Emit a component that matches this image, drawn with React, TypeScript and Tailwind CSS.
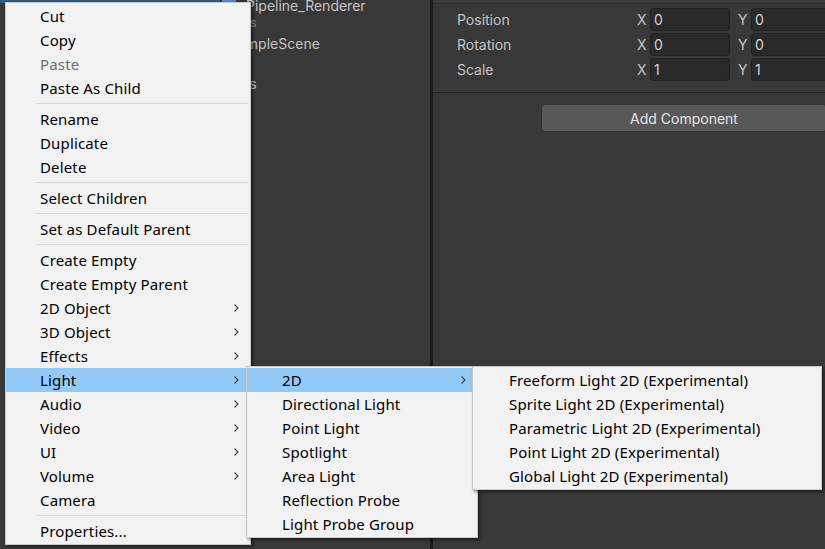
import React from "react";

type Entry = { label: string; disabled?: boolean; sub?: boolean; active?: boolean } | "sep";

const mainMenu: Entry[] = [
  { label: "Cut" },
  { label: "Copy" },
  { label: "Paste", disabled: true },
  { label: "Paste As Child" },
  "sep",
  { label: "Rename" },
  { label: "Duplicate" },
  { label: "Delete" },
  "sep",
  { label: "Select Children" },
  "sep",
  { label: "Set as Default Parent" },
  "sep",
  { label: "Create Empty" },
  { label: "Create Empty Parent" },
  { label: "2D Object", sub: true },
  { label: "3D Object", sub: true },
  { label: "Effects", sub: true },
  { label: "Light", sub: true, active: true },
  { label: "Audio", sub: true },
  { label: "Video", sub: true },
  { label: "UI", sub: true },
  { label: "Volume", sub: true },
  { label: "Camera" },
  "sep",
  { label: "Properties..." },
];

const lightMenu: Entry[] = [
  { label: "2D", sub: true, active: true },
  { label: "Directional Light" },
  { label: "Point Light" },
  { label: "Spotlight" },
  { label: "Area Light" },
  { label: "Reflection Probe" },
  { label: "Light Probe Group" },
];

const light2dMenu: Entry[] = [
  { label: "Freeform Light 2D (Experimental)" },
  { label: "Sprite Light 2D (Experimental)" },
  { label: "Parametric Light 2D (Experimental)" },
  { label: "Point Light 2D (Experimental)" },
  { label: "Global Light 2D (Experimental)" },
];

function Chevron() {
  return (
    <svg width="6" height="10" viewBox="0 0 6 10" className="shrink-0">
      <path d="M1.5 1.5 L5 5 L1.5 8.5" fill="none" stroke="#404040" strokeWidth="1.1" />
    </svg>
  );
}

function Menu({ items, className, textPad }: { items: Entry[]; className: string; textPad: string }) {
  return (
    <div
      className={`absolute bg-[#f2f2f2] border border-[#c8c8c8] py-px shadow-[2px_2px_3px_rgba(0,0,0,0.45)] font-['Noto_Sans',sans-serif] text-[15px] tracking-[0.15px] ${className}`}
    >
      {items.map((it, i) =>
        it === "sep" ? (
          <div key={i} className="h-[7px] flex items-center pl-[30px] pr-[2px]">
            <div className="h-px w-full bg-[#d7d7d7]" />
          </div>
        ) : (
          <div
            key={i}
            className={`h-[24px] flex items-center pr-[11px] ${textPad} ${it.active ? "bg-[#91c9f7]" : ""} ${
              it.disabled ? "text-[#6d6d6d]" : "text-black"
            }`}
          >
            <span className="flex-1 whitespace-nowrap leading-none pt-px">{it.label}</span>
            {it.sub && <Chevron />}
          </div>
        )
      )}
    </div>
  );
}

function VecField({ axis, value }: { axis: string; value: string }) {
  return (
    <div className="flex items-center">
      <span className="w-[13px] text-[#c4c4c4]">{axis}</span>
      <div className="w-[80px] h-[23px] rounded-[3px] bg-[#2a2a2a] border border-[#212121] flex items-center pl-[3px] text-[#d2d2d2]">
        {value}
      </div>
    </div>
  );
}

export default function App() {
  const rows = [
    ["Position", "0", "0"],
    ["Rotation", "0", "0"],
    ["Scale", "1", "1"],
  ];

  return (
    <div className="relative w-[825px] h-[549px] overflow-hidden bg-[#383838] flex font-['Inter',sans-serif] text-[14px]">
      {/* project panel behind the menu */}
      <div className="w-[430px] shrink-0 flex flex-col text-[#c4c4c4]">
        <div className="h-[3px] w-[220px] bg-[#2c5d87]" />
        <div className="h-[20px] -mt-[8px] flex items-center pl-[222px]">
          <div className="w-[14px] h-[12px] bg-[#4a8ad0] mr-[10px]" />
          <span className="whitespace-nowrap">Pipeline_Renderer</span>
        </div>
        <div className="h-[15px] flex items-center pl-[214px] text-[12px] text-[#9a9a9a]">Presets</div>
        <div className="h-[26px] flex items-center pl-[229px]">SampleScene</div>
        <div className="h-[17px]" />
        <div className="h-[20px] flex items-center pl-[203px]">Settings</div>
      </div>
      <div className="w-[3px] shrink-0 bg-[#1b1b1b]" />

      {/* inspector */}
      <div className="flex-1 flex flex-col">
        <div className="h-[4px] bg-[#3c3c3c] border-b border-[#2a2a2a]" />
        <div className="pt-[3px] pb-[10px] pl-[24px] border-b border-[#232323] flex flex-col">
          {rows.map(([label, x, y]) => (
            <div key={label} className="h-[25px] flex items-center whitespace-nowrap">
              <span className="w-[180px] text-[#c4c4c4]">{label}</span>
              <VecField axis="X" value={x} />
              <div className="w-[8px]" />
              <VecField axis="Y" value={y} />
            </div>
          ))}
        </div>
        <div className="pt-[11px] pl-[108px] flex">
          <button className="w-[286px] h-[28px] shrink-0 rounded-[4px] bg-[#585858] border border-[#303030] text-[#e4e4e4] text-[14px]">
            Add Component
          </button>
        </div>
      </div>

      {/* context menus */}
      <Menu items={mainMenu} className="left-[5px] top-[2px] w-[246px]" textPad="pl-[34px]" />
      <Menu items={lightMenu} className="left-[246px] top-[366px] w-[232px]" textPad="pl-[35px]" />
      <Menu items={light2dMenu} className="left-[472px] top-[366px] w-[350px]" textPad="pl-[36px]" />
    </div>
  );
}
